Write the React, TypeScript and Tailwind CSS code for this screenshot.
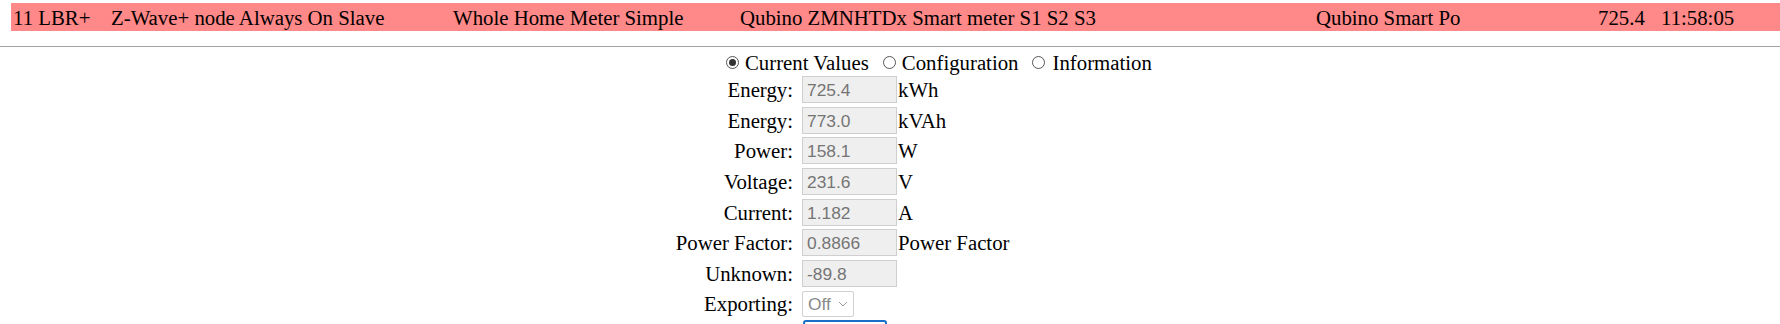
const header = [
  { w: "w-[98px]", t: "11 LBR+" },
  { w: "w-[342px]", t: "Z-Wave+ node Always On Slave" },
  { w: "w-[287px]", t: "Whole Home Meter Simple" },
  { w: "w-[576px]", t: "Qubino ZMNHTDx Smart meter S1 S2 S3" },
  { w: "w-[282px]", t: "Qubino Smart Po" },
  { w: "w-[63px]", t: "725.4" },
  { w: "w-[110px]", t: "11:58:05" },
];

const rows = [
  { label: "Energy:", value: "725.4", unit: "kWh" },
  { label: "Energy:", value: "773.0", unit: "kVAh" },
  { label: "Power:", value: "158.1", unit: "W" },
  { label: "Voltage:", value: "231.6", unit: "V" },
  { label: "Current:", value: "1.182", unit: "A" },
  { label: "Power Factor:", value: "0.8866", unit: "Power Factor" },
  { label: "Unknown:", value: "-89.8", unit: "" },
];

function Radio({ checked }: { checked?: boolean }) {
  return (
    <span className="w-[13px] h-[13px] rounded-full border border-[#555] bg-white flex items-center justify-center shrink-0">
      {checked && <span className="w-[7px] h-[7px] rounded-full bg-[#333]" />}
    </span>
  );
}

export default function App() {
  return (
    <div className="w-[1780px] h-[324px] overflow-hidden bg-white text-black font-['Liberation_Serif',serif] text-[20.8px]">
      <div className="pt-[3px] pl-[11px]">
        <div className="flex h-[28px] leading-[29px] bg-[#ff8888] whitespace-nowrap">
          {header.map((h, i) => (
            <div key={i} className={`${h.w} pl-[2px] shrink-0`}>
              {h.t}
            </div>
          ))}
        </div>
      </div>
      <div className="mt-[15px] h-px bg-[#a3a3a3]" />
      <div className="flex items-center h-[29px] pl-[726px] pt-[1px] leading-[29px]">
        <Radio checked />
        <span className="ml-[6px]">Current Values</span>
        <span className="ml-[14px]"><Radio /></span>
        <span className="ml-[6px]">Configuration</span>
        <span className="ml-[14px]"><Radio /></span>
        <span className="ml-[7px]">Information</span>
      </div>
      <div className="flex flex-col gap-[3.67px]">
        {rows.map((r, i) => (
          <div key={i} className="flex items-center h-[27px]">
            <div className="w-[793px] text-right leading-[27px]">{r.label}</div>
            <div className="ml-[9px] w-[95px] h-[27px] border border-[#cfcfcf] bg-[#efefef] pl-[4px] text-[#757575] font-['Liberation_Sans',sans-serif] text-[17.4px] leading-[26px]">
              {r.value}
            </div>
            <div className="ml-[1px] leading-[27px]">{r.unit}</div>
          </div>
        ))}
        <div className="flex items-center h-[26px]">
          <div className="w-[793px] text-right leading-[26px]">Exporting:</div>
          <div className="ml-[9px] w-[52px] h-[26px] border border-[#d0d0d0] rounded-[2px] bg-white flex items-center pl-[5px] text-[#8a8a8a] font-['Liberation_Sans',sans-serif] text-[17.4px]">
            <span>Off</span>
            <svg width="10" height="6" viewBox="0 0 10 6" className="ml-[7px]">
              <path d="M1 1 L5 5 L9 1" fill="none" stroke="#9a9a9a" strokeWidth="1" />
            </svg>
          </div>
        </div>
        <div className="flex">
          <div className="ml-[803px] w-[84px] h-[30px] border-2 border-[#1a6fc9] rounded-[3px] bg-white" />
        </div>
      </div>
    </div>
  );
}
